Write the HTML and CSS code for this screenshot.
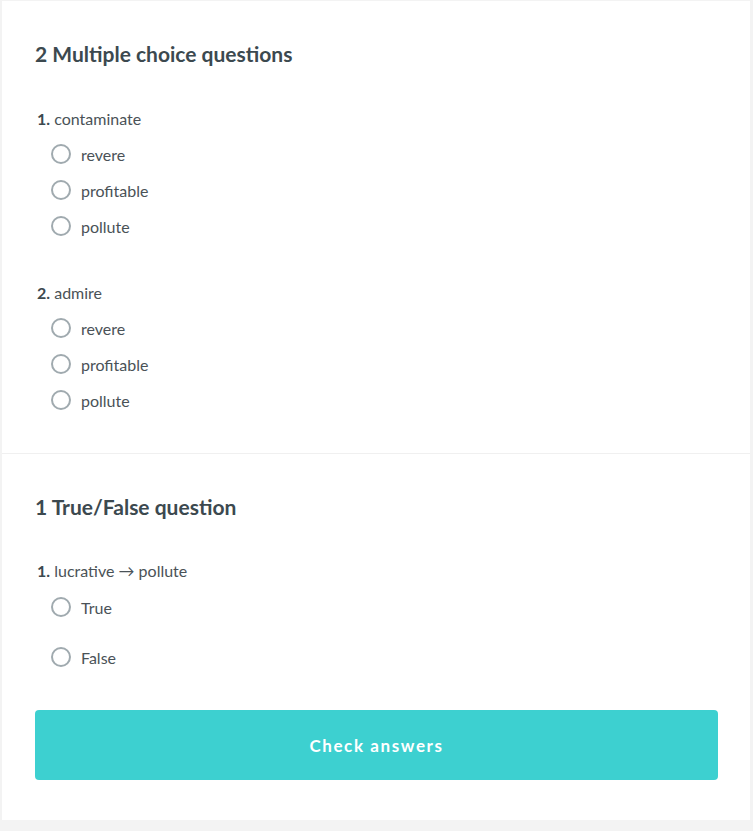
FILE: index.html
```html
<!DOCTYPE html>
<html lang="en">
<head>
    <meta charset="UTF-8">
    <meta name="viewport" content="width=device-width, initial-scale=1.0">
    <title>Quiz</title>

    <link rel="stylesheet" href="styles.css">
</head>
<body>
    <div class="card">

        <section class="quiz-section">
            <h2 class="section-title">2 Multiple choice questions</h2>

            <div class="question">
                <div class="question-text"><b>1.</b> contaminate</div>
                <div class="options">
                    <label class="option"><input type="radio" name="q1"> revere</label>
                    <label class="option"><input type="radio" name="q1"> profitable</label>
                    <label class="option"><input type="radio" name="q1"> pollute</label>
                </div>
            </div>

            <div class="question">
                <div class="question-text"><b>2.</b> admire</div>
                <div class="options">
                    <label class="option"><input type="radio" name="q2"> revere</label>
                    <label class="option"><input type="radio" name="q2"> profitable</label>
                    <label class="option"><input type="radio" name="q2"> pollute</label>
                </div>
            </div>
        </section>

        <section class="quiz-section tf-section">
            <h2 class="section-title">1 True/False question</h2>

            <div class="question">
                <div class="question-text"><b>1.</b> lucrative &rarr; pollute</div>
                <div class="options tf-options">
                    <label class="option"><input type="radio" name="tf1"> True</label>
                    <label class="option"><input type="radio" name="tf1"> False</label>
                </div>
            </div>

            <div class="button-area">
                <a href="#" class="check-button">Check answers</a>
            </div>
        </section>

    </div>
</body>
</html>
```

FILE: styles.css
```css
* {
  font-family: 'Lato', 'Liberation Sans', sans-serif;
  box-sizing: border-box;
}

body {
    margin: 0;
    background-color: #f3f3f3;
    min-height: 100vh;
}

.card {
    background-color: #ffffff;
    margin: 1px 3px 0 2px;
}

.quiz-section {
    padding: 39px 32px 35px 33px;
}

.tf-section {
    border-top: 1px solid #f0f0f0;
    padding-bottom: 40px;
}

.section-title {
    margin: 0;
    font-size: 21px;
    line-height: 28px;
    font-weight: 700;
    color: #3c494f;
}

.question {
    margin-top: 38px;
}

.section-title + .question {
    margin-top: 40px;
}

.tf-section .section-title + .question {
    margin-top: 39px;
}

.question-text {
    font-size: 16px;
    line-height: 22px;
    color: #4a5257;
    padding-left: 2px;
}

.question-text b {
    color: #3c494f;
}

.options {
    display: flex;
    flex-direction: column;
    margin-top: 6px;
    padding-left: 16px;
}

.option {
    display: flex;
    align-items: center;
    height: 36px;
    font-size: 16px;
    color: #4a5257;
    cursor: pointer;
}

.tf-options {
    margin-top: 0;
}

.tf-options .option {
    height: 50px;
}

.option input {
    appearance: none;
    -webkit-appearance: none;
    width: 20px;
    height: 20px;
    margin: 0 10px 0 0;
    border: 2px solid #a0aaaf;
    border-radius: 50%;
    background: #fff;
    cursor: pointer;
}

.button-area {
    margin-top: 28px;
}

.check-button {
    display: flex;
    align-items: center;
    justify-content: center;
    height: 70px;
    background-color: #3dd0d0;
    border-radius: 4px;
    color: #ffffff;
    font-size: 17px;
    font-weight: 700;
    letter-spacing: 1.6px;
    text-decoration: none;
}

.check-button:hover {
    background-color: #34bcbc;
}
```
